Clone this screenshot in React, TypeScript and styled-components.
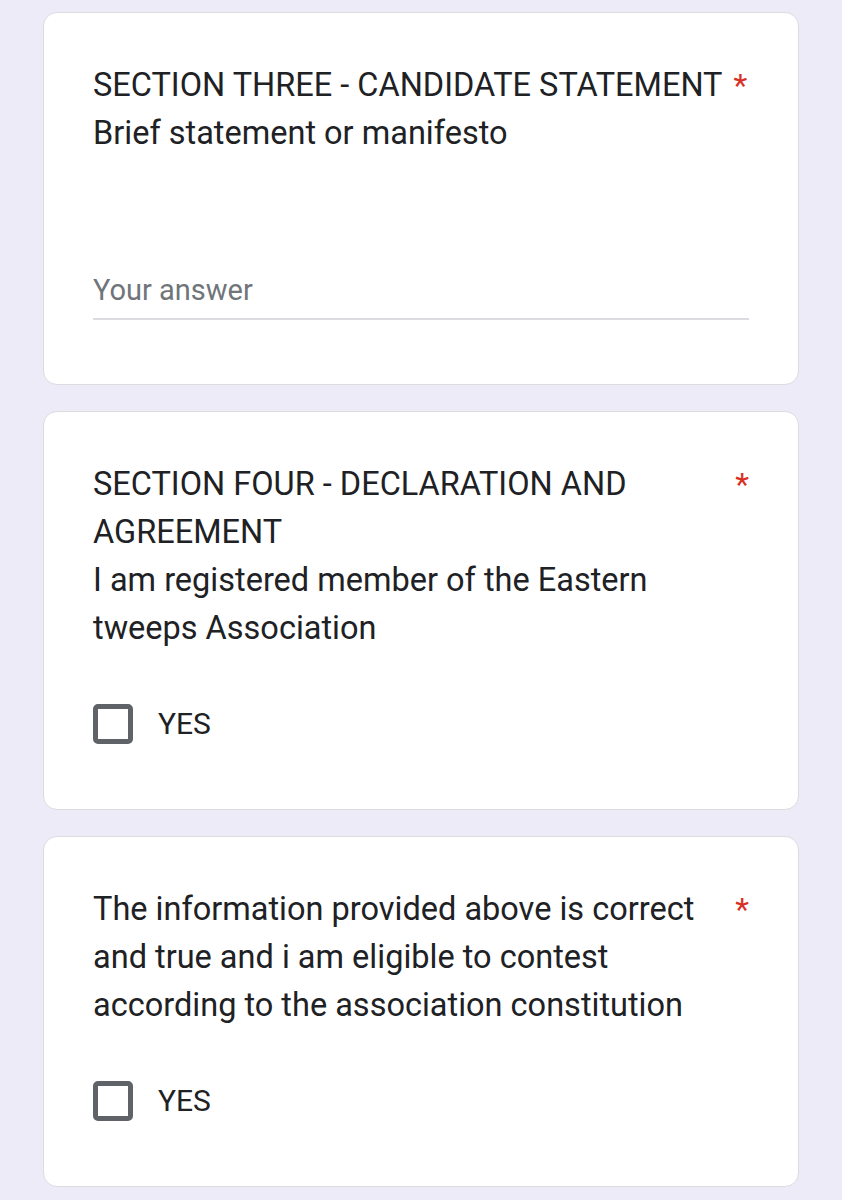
import React from 'react'
import styled, { createGlobalStyle } from 'styled-components'

const GlobalStyle = createGlobalStyle`
    * {
        box-sizing: border-box;
    }
    body {
        margin: 0;
        background-color: #eeebf8;
        font-family: Roboto, "Noto Sans", Arial, sans-serif;
        color: #202124;
    }
`

type QuestionPropsType = {
    title: string
    description?: string
    children: React.ReactNode
}

const Question = (props: QuestionPropsType) => {
    return (
        <Card>
            <Header>
                <TitleText>
                    <div>{props.title}</div>
                    {props.description && <div>{props.description}</div>}
                </TitleText>
                <Required>*</Required>
            </Header>
            {props.children}
        </Card>
    )
}

const CheckOption = ({ label }: { label: string }) => {
    return (
        <OptionRow>
            <Box />
            <OptionLabel>{label}</OptionLabel>
        </OptionRow>
    )
}

export default function App() {
    return (
        <>
            <GlobalStyle />
            <Page>
                <Question
                    title="SECTION THREE - CANDIDATE STATEMENT"
                    description="Brief statement or manifesto"
                >
                    <AnswerInput>Your answer</AnswerInput>
                </Question>
                <Question
                    title="SECTION FOUR - DECLARATION AND AGREEMENT"
                    description="I am registered member of the Eastern tweeps Association"
                >
                    <CheckOption label="YES" />
                </Question>
                <Question title="The information provided above is correct and true and i am eligible to contest according to the association constitution">
                    <CheckOption label="YES" />
                </Question>
            </Page>
        </>
    )
}

const Page = styled.div`
    display: flex;
    flex-direction: column;
    gap: 26px;
    padding: 12px 43px 12px;
`

const Card = styled.div`
    background-color: #ffffff;
    border: 1.5px solid #dadce0;
    border-radius: 14px;
    padding: 48px 49px 61px;
`

const Header = styled.div`
    display: flex;
    align-items: flex-start;
`

const TitleText = styled.div`
    flex: 0 1 auto;
    max-width: 636px;
    font-size: 32.5px;
    line-height: 48px;
    letter-spacing: 0;
`

const Required = styled.span`
    flex-shrink: 0;
    margin-left: 11px;
    color: #d93025;
    font-size: 32px;
    line-height: 48px;
`

const AnswerInput = styled.div`
    margin-top: 109px;
    margin-bottom: 3px;
    padding-bottom: 4px;
    border-bottom: 2px solid #dadce0;
    font-size: 29px;
    line-height: 48px;
    color: #70757a;
`

const OptionRow = styled.div`
    display: flex;
    align-items: center;
    gap: 25px;
    height: 48px;
    margin-top: 48px;
`

const Box = styled.span`
    width: 40px;
    height: 40px;
    border: 5px solid #5f6368;
    border-radius: 5px;
    flex-shrink: 0;
`

const OptionLabel = styled.span`
    font-size: 30px;
    line-height: 48px;
`
